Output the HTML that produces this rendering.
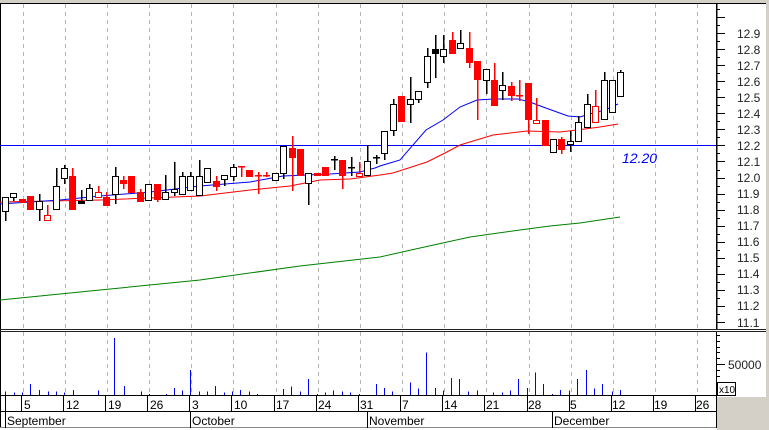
<!DOCTYPE html>
<html><head><meta charset="utf-8"><style>
html,body{margin:0;padding:0;background:#fff;width:769px;height:430px;overflow:hidden}
svg{display:block;font-family:"Liberation Sans",Arial,sans-serif}
</style></head><body>
<svg id="s" width="769" height="430" viewBox="0 0 769 430" xmlns="http://www.w3.org/2000/svg" shape-rendering="crispEdges">
<rect x="0" y="0" width="769" height="430" fill="#fff"/>
<rect x="0" y="0" width="769" height="3" fill="#d4d0c8"/>
<rect x="766" y="0" width="3" height="430" fill="#d4d0c8"/>
<rect x="717" y="397" width="52" height="33" fill="#d4d0c8"/>
<line x1="0" y1="3.5" x2="766" y2="3.5" stroke="#000"/>
<line x1="0.5" y1="3" x2="0.5" y2="428" stroke="#000"/>
<g id="grid" stroke="#b4b4b4" stroke-dasharray="4,4"></g>
<rect x="0" y="145" width="716" height="1" fill="#0000ff"/>
<g id="ma" fill="none" shape-rendering="auto">
<polyline stroke="#008000" points="0,300 100,290 200,280 300,266 380,257 420,248 470,237 520,230 550,226 580,223 620,217"/>
<polyline stroke="#ff0000" points="0,202 100,200 200,196 250,190 290,186 320,180 350,179 380,175 393,173 427,162 445,153 460,145 493,135 527,131 560,132 577,130 600,127 618,124"/>
<polyline stroke="#0000ff" points="0,204 60,200 100,196 150,192 200,186 250,182 283,176 330,174 360,172 375,168 380,166 400,160 426,130 443,120 460,107 477,100 493,99 518,99 530,102 543,107 568,116 580,117 593,113 605,110 618,104"/>
</g>
<g id="candles"></g>
<text x="622" y="163" fill="#0000ff" font-size="14" font-style="italic">12.20</text>
<line x1="716.5" y1="3" x2="716.5" y2="329" stroke="#000" stroke-width="1.5"/>
<g id="ticks" stroke="#000"></g>
<g font-size="12" fill="#222" id="plabels">
<text x="737" y="38">12.9</text><text x="737" y="54">12.8</text><text x="737" y="70">12.7</text><text x="737" y="86">12.6</text><text x="737" y="102">12.5</text><text x="737" y="118">12.4</text><text x="737" y="134">12.3</text><text x="737" y="150">12.2</text><text x="737" y="166">12.1</text><text x="737" y="182">12.0</text><text x="737" y="198">11.9</text><text x="737" y="214">11.8</text><text x="737" y="230">11.7</text><text x="737" y="246">11.6</text><text x="737" y="262">11.5</text><text x="737" y="278">11.4</text><text x="737" y="294">11.3</text><text x="737" y="310">11.2</text><text x="737" y="327">11.1</text>
</g>
<rect x="0" y="329" width="766" height="1" fill="#222"/>
<rect x="0" y="331" width="766" height="1" fill="#222"/>
<line x1="716.5" y1="332" x2="716.5" y2="396" stroke="#000"/>
<g id="vol" stroke="#0000ff"></g>
<text x="728" y="369" font-size="12" fill="#222">50000</text>
<rect x="717.5" y="382.5" width="18" height="13" fill="#fff" stroke="#000"/>
<text x="719" y="393" font-size="10" fill="#000">x10</text>
<line x1="0" y1="395.5" x2="717" y2="395.5" stroke="#000"/>
<line x1="0" y1="411.5" x2="717" y2="411.5" stroke="#000"/>
<line x1="0" y1="427.5" x2="717" y2="427.5" stroke="#888"/>
<g id="dsep" stroke="#000"></g>
<g font-size="12" fill="#000">
<text x="24" y="409">5</text><text x="66" y="409">12</text><text x="108" y="409">19</text><text x="150" y="409">26</text><text x="192" y="409">3</text><text x="234" y="409">10</text><text x="276" y="409">17</text><text x="318" y="409">24</text><text x="360" y="409">31</text><text x="402" y="409">7</text><text x="444" y="409">14</text><text x="486" y="409">21</text><text x="528" y="409">28</text><text x="570" y="409">5</text><text x="612" y="409">12</text><text x="654" y="409">19</text><text x="696" y="409">26</text>
<text x="7" y="425">September</text><text x="192" y="425">October</text><text x="369" y="425">November</text><text x="554" y="425">December</text>
</g>
</svg>
<script>
var NS="http://www.w3.org/2000/svg";
function el(p,t,a){var e=document.createElementNS(NS,t);for(var k in a)e.setAttribute(k,a[k]);document.getElementById(p).appendChild(e);return e;}
for(var k=0;k<17;k++){var x=Math.round(22.7+42.15*k)+0.5;el("grid","line",{x1:x,y1:4,x2:x,y2:329});el("grid","line",{x1:x,y1:332,x2:x,y2:395});}
for(var k=0;k<17;k++){var x=Math.round(22.7+42.15*k)-1.5;el("dsep","line",{x1:x,y1:396,x2:x,y2:411});}
el("dsep","line",{x1:5.5,y1:396,x2:5.5,y2:428});
[190.5,367.5,552.5,716.5].forEach(function(x){el("dsep","line",{x1:x,y1:412,x2:x,y2:428});});
el("dsep","line",{x1:716.5,y1:396,x2:716.5,y2:428});
for(var j=-4;j<=37;j++){var y=Math.round(33+8.03*j)+0.5;if(y<5||y>328)continue;el("ticks","line",{x1:716,y1:y,x2:(j%2==0?725:720),y2:y});}
for(var j=0;j<8;j++){var y=Math.round(335+5.8*j)+0.5;el("ticks","line",{x1:716,y1:y,x2:(j==5?725:720),y2:y});}
var C=[[0,'h',197,211,197,220],[1,'h',193,197,193,200],[2,'r',199,202],[3,'r',196,209],[4,'h',201,209,194,220],[5,'rh',215,220,205,220],[6,'h',186,209,168,209],[7,'h',168,178,165,183],[8,'r',176,209,168,209],[9,'b',201,203,190,203],[10,'h',188,200,184,200],[11,'rh',192,197,186,197],[12,'r',197,205,192,205],[13,'h',176,194,167,203],[14,'r',180,183,176,188],[15,'r',176,192],[16,'r',192,201,189,201],[17,'h',184,200],[18,'r',184,199,184,201],[19,'h',192,199,175,199],[20,'h',189,192,162,195],[21,'h',176,194,172,194],[22,'h',176,190,172,190],[23,'h',176,195,160,195],[24,'h',168,182],[25,'r',181,186,176,190],[26,'h',175,179,175,185],[27,'h',167,176,164,180],[28,'rc',166,166,166,176],[29,'r',170,176],[30,'rc',175,175,172,193],[31,'rc',175,175,172,176],[32,'h',173,180],[33,'h',146,173,146,178],[34,'r',148,157,136,190],[35,'r',149,175],[36,'h',173,183,173,204],[37,'r',173,175],[38,'r',167,175],[39,'bc',159,159,156,169],[40,'r',160,175,160,188],[41,'bc',167,167,157,175],[42,'rh',173,176,162,176],[43,'h',161,175,145,175],[44,'bc',157,157,155,163],[45,'h',131,153,131,159],[46,'h',104,130,99,135],[47,'r',96,121],[48,'h',99,104,77,122],[49,'h',91,99,91,102],[50,'h',56,82,48,87],[51,'b',49,53,35,77],[52,'h',49,56,35,62],[53,'r',40,53,32,53],[54,'h',43,48,30,48],[55,'r',48,62,32,67],[56,'r',61,79,61,119],[57,'h',69,80,69,93],[58,'r',80,105,63,105],[59,'h',85,90,72,99],[60,'r',86,95,82,100],[61,'rc',95,95,80,100],[62,'r',83,119,83,133],[63,'rh',120,123,98,123],[64,'r',120,145],[65,'h',139,152],[66,'r',139,149,137,153],[67,'h',141,144,131,151],[68,'h',122,141,116,141],[69,'h',104,127,94,127],[70,'rh',106,122,90,122],[71,'h',80,119,72,119],[72,'h',80,112],[73,'h',72,96,70,96]];
C.forEach(function(c){var i=c[0],t=c[1],top=c[2],bot=c[3],wt=c.length>4?c[4]:top,wb=c.length>4?c[5]:bot;
var x=Math.round(5+8.43*i);var col=(t[0]=='r')?'#ff0000':'#000';
el("candles","line",{x1:x+0.5,y1:wt,x2:x+0.5,y2:wb+1,stroke:col,"stroke-width":1.5});
if(t=='rc'||t=='bc'){el("candles","line",{x1:x-3,y1:top+0.5,x2:x+4,y2:top+0.5,stroke:col,"stroke-width":1.5});return;}
if(t=='r'||t=='b'){el("candles","rect",{x:x-3,y:top,width:7,height:Math.max(bot-top,2)+1,fill:col});}
else{el("candles","rect",{x:x-2.5,y:top+0.5,width:6,height:Math.max(bot-top,2),fill:'#fff',stroke:col,"stroke-width":1.3});}
});
var V=[[10,214],[28,218],[45,218],[62,192],[80,210],[97,215],[114,215],[131,218],[148,210],[200,212],[233,54],[252,198],[287,215],[304,222],[338,222],[354,204],[372,212],[388,150],[405,215],[422,215],[439,198],[457,218],[474,215],[490,210],[508,215],[524,222],[578,207],[594,200],[611,215],[628,177],[646,222],[663,218],[680,212],[697,215],[714,218],[731,222],[766,192],[783,204],[800,215],[835,188],[852,206],[869,98],[886,204],[903,212],[920,174],[936,177],[955,215],[972,212],[1006,218],[1023,218],[1040,212],[1057,177],[1074,204],[1091,158],[1108,192],[1125,222],[1142,210],[1160,212],[1177,177],[1194,150],[1211,206],[1228,192],[1247,215],[1264,210]];
V.forEach(function(v){var x=Math.round(v[0]/2.039)+0.5;el("vol","line",{x1:x,y1:320+v[1]/3,x2:x,y2:395});});
</script>
</body></html>
